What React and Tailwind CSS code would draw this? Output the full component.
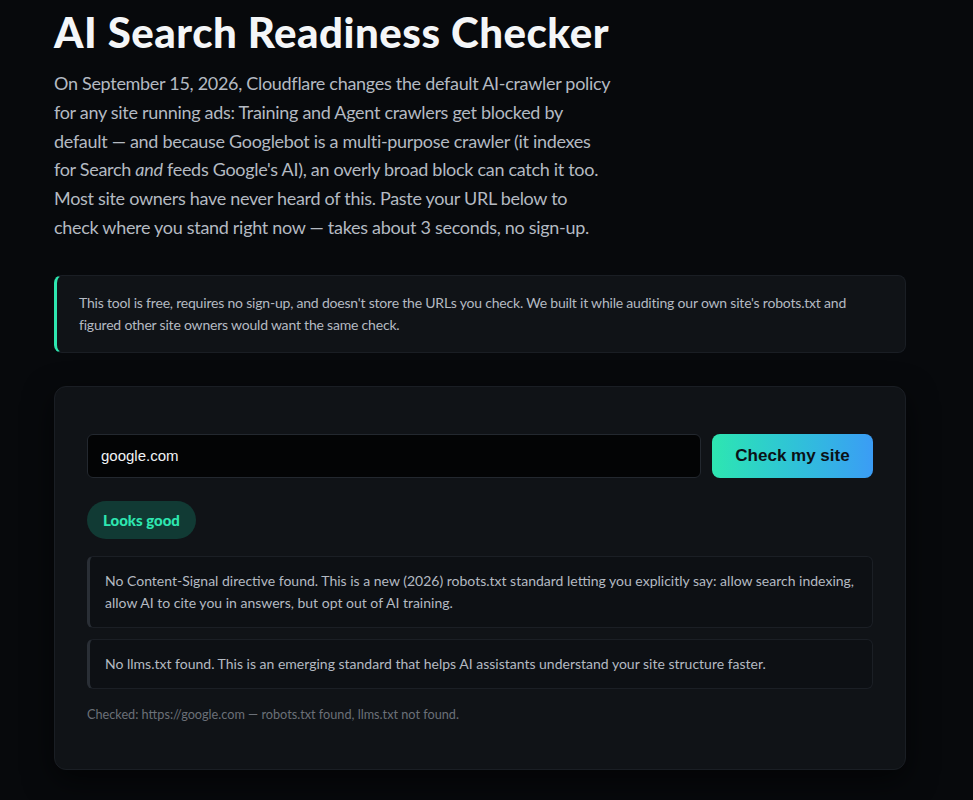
import { useState } from "react";

const sans = { fontFamily: "Lato, 'Noto Sans', sans-serif" };

export default function App() {
    const [url, setUrl] = useState("google.com");

    const findings = [
        "No Content-Signal directive found. This is a new (2026) robots.txt standard letting you explicitly say: allow search indexing, allow AI to cite you in answers, but opt out of AI training.",
        "No llms.txt found. This is an emerging standard that helps AI assistants understand your site structure faster.",
    ];

    return (
        <div className="min-h-[800px] bg-[#07090c] text-[#e6e8eb]" style={sans}>
            <div className="w-[852px] ml-[54px] pt-[10px] pb-8">
                <h1 className="text-[42px] leading-[44px] font-black text-[#f4f6f8] tracking-[0.5px]">AI Search Readiness Checker</h1>

                <p className="mt-[15px] w-[558px] text-[18px] leading-[28.8px] tracking-[-0.3px] text-[#b4bac2]">
                    On September 15, 2026, Cloudflare changes the default AI-crawler policy for any site running ads: Training and Agent crawlers get blocked by default — and because Googlebot is a multi-purpose crawler (it indexes for Search <em>and</em> feeds Google's AI), an overly broad block can catch it too. Most site owners have never heard of this. Paste your URL below to check where you stand right now — takes about 3 seconds, no sign-up.
                </p>

                <div className="mt-[33px] rounded-lg border border-[#1a1e24] border-l-[3px] border-l-[#2ee6b0] bg-[#101317] px-[22px] py-[16px] text-[14px] leading-[22px] tracking-[-0.2px] text-[#b4bac2]">
                    This tool is free, requires no sign-up, and doesn't store the URLs you check. We built it while auditing our own site's robots.txt and figured other site owners would want the same check.
                </div>

                <div className="mt-[33px] rounded-xl border border-[#1a1e24] bg-[#101317] px-8 pt-[47px] pb-[46px] shadow-[0_10px_30px_rgba(0,0,0,0.6)]">
                    <form className="flex gap-[11px]" onSubmit={(e) => e.preventDefault()}>
                        <input
                            value={url}
                            onChange={(e) => setUrl(e.target.value)}
                            className="flex-1 h-[44px] rounded-md border border-[#23282f] bg-[#030405] px-[13px] text-[15px] text-[#f1f3f5] outline-none"
                            style={{ fontFamily: "'Liberation Sans', Arial, sans-serif" }}
                        />
                        <button
                            className="w-[161px] h-[44px] rounded-lg bg-gradient-to-r from-[#2ee6b0] to-[#3b9cf5] text-[17px] font-bold text-[#0b1116]"
                            style={{ fontFamily: "'Liberation Sans', Arial, sans-serif" }}
                        >
                            Check my site
                        </button>
                    </form>

                    <div className="mt-[23px] inline-flex h-[38px] items-center rounded-full bg-[#113a34] px-[16px] text-[15px] font-black text-[#2ee6b0]">
                        Looks good
                    </div>

                    <div className="mt-[17px] flex flex-col gap-[11px]">
                        {findings.map((f, i) => (
                            <div key={i} className="rounded-md border border-[#1b1f25] border-l-[3px] border-l-[#2a2f36] bg-[#0d1014] px-[15px] py-[13px] text-[14px] leading-[22px] text-[#b4bac2]">
                                {f}
                            </div>
                        ))}
                    </div>

                    <div className="mt-[16px] text-[12.7px] leading-[18px] text-[#6b7078]">
                        Checked: https://google.com — robots.txt found, llms.txt not found.
                    </div>
                </div>
            </div>
        </div>
    );
}
